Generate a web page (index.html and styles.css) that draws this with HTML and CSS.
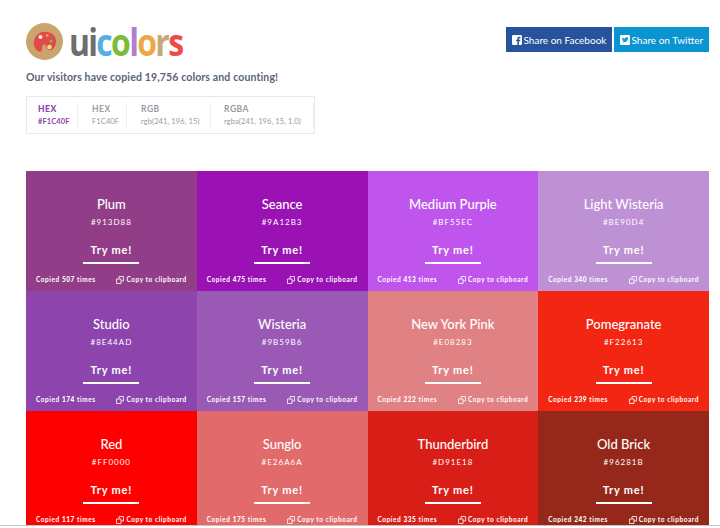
FILE: index.html
```html
<!DOCTYPE html>
<html lang="en">
<head>
<meta charset="utf-8">
<title>uicolors</title>
<link rel="stylesheet" href="styles.css">
</head>
<body>
<svg class="defs" width="0" height="0"><symbol id="copy" viewBox="0 0 8 8"><path d="M3 3V.5h4.500V5H5M.5 3H5v4.500H.5z" fill="none" stroke="#fff" stroke-width=".8"/></symbol></svg>
<div class="page">
<header class="top">
  <a class="logo">
    <svg class="logo-icon" width="37" height="37" viewBox="0 0 37 37"><circle cx="18.500" cy="18.500" r="18.500" fill="#c9a56c"/><path d="M17 9c7-1 13 3 13 9 0 5-3 10-7 9-3-.7-2-4-4-5.500-2-1.500-3 2-3 4.500 0 2.500-2 3.500-4 2-3-2-5-6-4-10 .8-4.500 4-8.500 9-9z" fill="#e2494b"/><circle cx="14.500" cy="14" r="2" fill="#f5f1e6"/><circle cx="21" cy="12.500" r="1.500" fill="#ef9d3f"/><circle cx="25" cy="18" r="1.500" fill="#7ec24a"/><circle cx="23.500" cy="24" r="2.300" fill="#f6dd87"/></svg>
    <span class="logo-text"><span class="l-grey">ui</span><span class="l-blue">c</span><span class="l-green">o</span><span class="l-purple">l</span><span class="l-orange">o</span><span class="l-tan">r</span><span class="l-red">s</span></span>
  </a>
  <div class="share">
    <a class="btn fb"><svg width="10" height="10" viewBox="0 0 12 12"><path fill-rule="evenodd" d="M1.500 0h9A1.500 1.500 0 0 1 12 1.500v9a1.500 1.500 0 0 1-1.500 1.500H8.300V7.500h1.500l.2-1.800H8.300V4.600c0-.5.200-.8.900-.8h.9V2.200C9.800 2.100 9.400 2.100 8.800 2.100c-1.400 0-2.300.8-2.300 2.300v1.300H5v1.800h1.500V12h-5A1.500 1.500 0 0 1 0 10.500v-9A1.500 1.500 0 0 1 1.500 0z" fill="#fff"/></svg>Share on Facebook</a>
    <a class="btn tw"><svg width="10" height="10" viewBox="0 0 12 12"><path fill-rule="evenodd" d="M1.500 0h9A1.500 1.500 0 0 1 12 1.500v9a1.500 1.500 0 0 1-1.500 1.500h-9A1.500 1.500 0 0 1 0 10.500v-9A1.500 1.500 0 0 1 1.500 0zM10 3.400c-.3.100-.6.200-.9.200.3-.2.600-.5.700-.9-.3.200-.7.300-1 .4a1.600 1.600 0 0 0-2.700 1.400C4.800 4.400 3.600 3.800 2.800 2.800c-.4.700-.2 1.600.5 2.100-.3 0-.5-.1-.7-.2 0 .8.500 1.400 1.300 1.600-.2.100-.5.100-.7 0 .2.600.8 1.100 1.500 1.100-.7.500-1.500.8-2.400.7.700.5 1.600.7 2.500.7 3 0 4.700-2.500 4.600-4.800.3-.2.600-.5.800-.8z" fill="#fff"/></svg>Share on Twitter</a>
  </div>
</header>
<p class="tagline">Our visitors have copied 19,756 colors and counting!</p>
<div class="formats">
  <div class="fmt active fmt-a"><b>HEX</b><span>#F1C40F</span></div>
  <div class="fmt fmt-b"><b>HEX</b><span>F1C40F</span></div>
  <div class="fmt fmt-c"><b>RGB</b><span>rgb(241, 196, 15)</span></div>
  <div class="fmt fmt-d"><b>RGBA</b><span>rgba(241, 196, 15, 1.0)</span></div>
</div>
<main class="grid">
  <section class="cell c1"><h2>Plum</h2><p class="code">#913D88</p><a class="try">Try me!</a><div class="foot"><span>Copied <b>507</b> times</span><span class="copy"><svg width="8" height="8"><use href="#copy"/></svg>Copy to clipboard</span></div></section>
  <section class="cell c2"><h2>Seance</h2><p class="code">#9A12B3</p><a class="try">Try me!</a><div class="foot"><span>Copied <b>475</b> times</span><span class="copy"><svg width="8" height="8"><use href="#copy"/></svg>Copy to clipboard</span></div></section>
  <section class="cell c3"><h2>Medium Purple</h2><p class="code">#BF55EC</p><a class="try">Try me!</a><div class="foot"><span>Copied <b>413</b> times</span><span class="copy"><svg width="8" height="8"><use href="#copy"/></svg>Copy to clipboard</span></div></section>
  <section class="cell c4"><h2>Light Wisteria</h2><p class="code">#BE90D4</p><a class="try">Try me!</a><div class="foot"><span>Copied <b>340</b> times</span><span class="copy"><svg width="8" height="8"><use href="#copy"/></svg>Copy to clipboard</span></div></section>
  <section class="cell c5"><h2>Studio</h2><p class="code">#8E44AD</p><a class="try">Try me!</a><div class="foot"><span>Copied <b>174</b> times</span><span class="copy"><svg width="8" height="8"><use href="#copy"/></svg>Copy to clipboard</span></div></section>
  <section class="cell c6"><h2>Wisteria</h2><p class="code">#9B59B6</p><a class="try">Try me!</a><div class="foot"><span>Copied <b>157</b> times</span><span class="copy"><svg width="8" height="8"><use href="#copy"/></svg>Copy to clipboard</span></div></section>
  <section class="cell c7"><h2>New York Pink</h2><p class="code">#E08283</p><a class="try">Try me!</a><div class="foot"><span>Copied <b>222</b> times</span><span class="copy"><svg width="8" height="8"><use href="#copy"/></svg>Copy to clipboard</span></div></section>
  <section class="cell c8"><h2>Pomegranate</h2><p class="code">#F22613</p><a class="try">Try me!</a><div class="foot"><span>Copied <b>239</b> times</span><span class="copy"><svg width="8" height="8"><use href="#copy"/></svg>Copy to clipboard</span></div></section>
  <section class="cell c9"><h2>Red</h2><p class="code">#FF0000</p><a class="try">Try me!</a><div class="foot"><span>Copied <b>117</b> times</span><span class="copy"><svg width="8" height="8"><use href="#copy"/></svg>Copy to clipboard</span></div></section>
  <section class="cell c10"><h2>Sunglo</h2><p class="code">#E26A6A</p><a class="try">Try me!</a><div class="foot"><span>Copied <b>175</b> times</span><span class="copy"><svg width="8" height="8"><use href="#copy"/></svg>Copy to clipboard</span></div></section>
  <section class="cell c11"><h2>Thunderbird</h2><p class="code">#D91E18</p><a class="try">Try me!</a><div class="foot"><span>Copied <b>335</b> times</span><span class="copy"><svg width="8" height="8"><use href="#copy"/></svg>Copy to clipboard</span></div></section>
  <section class="cell c12"><h2>Old Brick</h2><p class="code">#96281B</p><a class="try">Try me!</a><div class="foot"><span>Copied <b>242</b> times</span><span class="copy"><svg width="8" height="8"><use href="#copy"/></svg>Copy to clipboard</span></div></section>
</main>
</div>
</body>
</html>
```
FILE: styles.css
```css
* { box-sizing: border-box; }
html, body { margin: 0; height: 528px; overflow: hidden; background: #fff; }
body { font-family: "Lato", "Open Sans", sans-serif; color: #fff; }
.defs { display: block; }
.page { padding: 23px 11px 0 26px; height: 526px; overflow: hidden; border-bottom: 1px solid #c4c4c4; }
.top { display: flex; justify-content: space-between; align-items: flex-start; height: 37px; }
.logo { display: flex; align-items: center; gap: 6px; height: 37px; }
.logo-icon { flex: none; }
.logo-text { display: block; transform: scaleX(.84); transform-origin: left center; font-family: "Open Sans", sans-serif; font-weight: 700; font-size: 38px; letter-spacing: -2px; line-height: 37px; }
.l-grey { color: #6e6e6e; } .l-blue { color: #57aee3; } .l-green { color: #7dbb3c; } .l-purple { color: #b07fce; }
.l-orange { color: #eea746; } .l-tan { color: #c9a878; } .l-red { color: #ef4a4a; }
.share { display: flex; gap: 2px; margin-top: 4px; }
.btn { display: flex; align-items: center; gap: 1.500px; height: 25px; padding: 0 6px; font-size: 10px; white-space: nowrap; }
.btn svg { flex: none; }
.fb { background: #26539b; width: 106px; }
.tw { background: #0a94d0; width: 95px; }
.tagline { margin: 10px 0 0; height: 14px; line-height: 14px; font-size: 10.500px; font-weight: 700; color: #5a6478; letter-spacing: .14px; }
.formats { display: flex; width: 289px; height: 38px; margin-top: 12px; border: 1px solid #e8e8e8; padding: 6px 0; }
.fmt { display: flex; flex-direction: column; gap: 3px; padding: 1px 0 0 11px; height: 25px; border-right: 1px solid #eee; color: #9a9aa2; font-size: 7.500px; white-space: nowrap; }
.fmt b { font-size: 8.500px; letter-spacing: .5px; line-height: 10px; }
.fmt span { line-height: 9px; letter-spacing: .1px; }
.fmt-a { width: 51px; } .fmt-b { width: 49px; padding-left: 14px; } .fmt-c { width: 84px; padding-left: 14px; } .fmt-d { width: 103px; padding-left: 13px; }
.active { color: #8e44ad; font-weight: 700; }
.grid { display: grid; grid-template-columns: repeat(4, 1fr); grid-auto-rows: 120px; margin-top: 37px; }
.cell { display: flex; flex-direction: column; align-items: center; padding-top: 24px; }
.cell h2 { margin: 0; font-size: 13px; font-weight: 500; line-height: 18px; }
.code { margin: 4px 0 0; font-size: 8px; line-height: 10px; letter-spacing: 1px; }
.try { margin-top: 15px; width: 56px; padding-bottom: 4px; height: 22px; text-align: center; border-bottom: 2px solid #fff; font-size: 11px; font-weight: 700; letter-spacing: .8px; line-height: 16px; white-space: nowrap; }
.foot { margin-top: 11px; width: 100%; padding: 0 10px; display: flex; justify-content: space-between; font-size: 6.500px; font-weight: 700; letter-spacing: .55px; line-height: 9px; white-space: nowrap; }
.copy { display: flex; align-items: center; gap: 2px; }
.c1 { background: #913d88; } .c2 { background: #9a12b3; } .c3 { background: #bf55ec; } .c4 { background: #be90d4; }
.c5 { background: #8e44ad; } .c6 { background: #9b59b6; } .c7 { background: #e08283; } .c8 { background: #f22613; }
.c9 { background: #ff0000; } .c10 { background: #e26a6a; } .c11 { background: #d91e18; } .c12 { background: #96281b; }
```
